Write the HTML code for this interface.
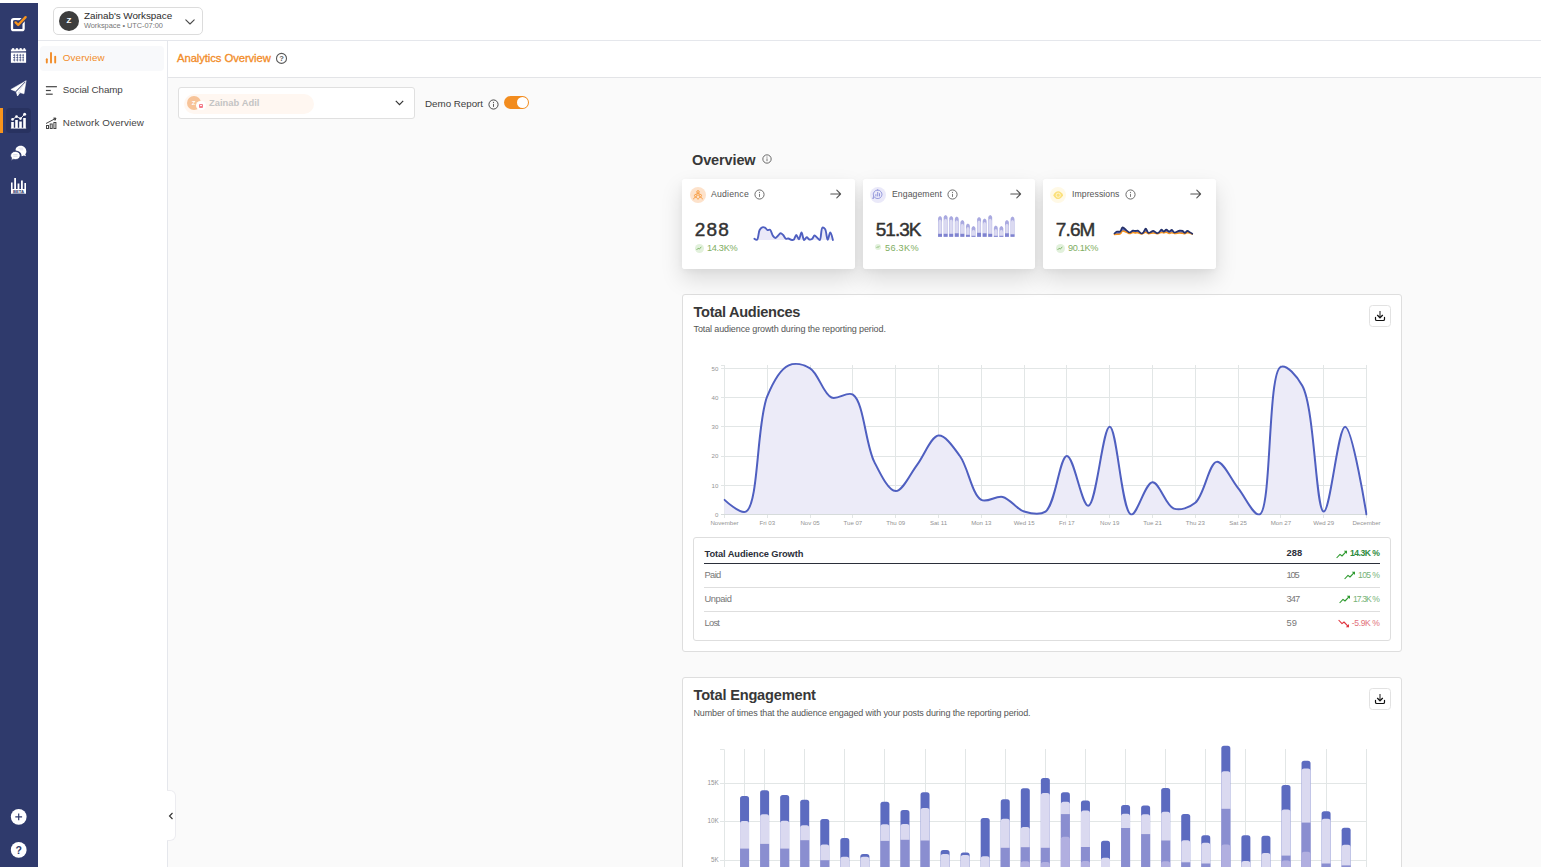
<!DOCTYPE html>
<html lang="en">
<head>
<meta charset="utf-8">
<title>Analytics Overview</title>
<style>
*{box-sizing:border-box;margin:0;padding:0}
html,body{width:1541px;height:867px;overflow:hidden;background:#fafafa;font-family:"Liberation Sans",sans-serif;color:#333}
.abs{position:absolute}
#rail{left:0;top:3px;width:38px;height:864px;background:#2f3a6c}
#topbar{left:38px;top:0;width:1503px;height:41px;background:#fff;border-bottom:1px solid #e5e7ec}
#topwhite{left:0;top:0;width:38px;height:3px;background:#fff}
#sidenav{left:38px;top:41px;width:130px;height:826px;background:#fff;border-right:1px solid #e5e7ec}
#header{left:168px;top:41px;width:1373px;height:37px;background:#fff;border-bottom:1px solid #e3e4e7}
#ws{left:53px;top:7px;width:150px;height:28px;border:1px solid #dcdcdc;border-radius:5px;background:#fff}
#ws .av{left:5px;top:3px;width:20px;height:20px;border-radius:50%;background:#3d3d3d;color:#fff;font-size:8px;font-weight:bold;text-align:center;line-height:20px}
#ws .t1{left:30px;top:1.6px;font-size:9.9px;line-height:12px;color:#2b2b2b;white-space:nowrap;letter-spacing:-0.05px}
#ws .t2{left:30px;top:13px;font-size:7.4px;line-height:10px;color:#777;white-space:nowrap;letter-spacing:-0.04px}
.nav{left:2.3px;width:123.6px;height:25px;border-radius:4px;font-size:9.8px;line-height:25px;color:#444;white-space:nowrap}
.nav span{position:absolute;left:22.5px;top:-0.6px}
.nav svg{position:absolute;left:4.7px;top:5px}
.nav.on{background:#f8f9fb;color:#f28c28}
#title{left:9px;top:10px;font-size:11.3px;line-height:14px;color:#f28c28;white-space:nowrap;letter-spacing:-0.09px;-webkit-text-stroke:0.3px #f28c28}
</style>
</head>
<body>
<div id="topwhite" class="abs"></div>
<div id="rail" class="abs">
<!-- compose -->
<svg class="abs" style="left:10px;top:12px" width="18" height="17" viewBox="0 0 18 17"><rect x="2" y="4.2" width="11.6" height="11" rx="1.8" fill="none" stroke="#fff" stroke-width="2.3"/><path d="M5.6 7.4 L8.2 10 L15.6 2.2" fill="none" stroke="#2f3a6c" stroke-width="4.6" stroke-linecap="round" stroke-linejoin="round"/><path d="M5.6 7.4 L8.2 10 L15.6 2.2" fill="none" stroke="#f7941d" stroke-width="2.4" stroke-linecap="round" stroke-linejoin="round"/></svg>
<!-- calendar -->
<svg class="abs" style="left:10px;top:44px" width="17" height="17" viewBox="0 0 17 17"><path d="M0.900 4.400V2.400H1.900V1.600Q3.100 0.300 4.300 1.600V2.400H5.700V1.600Q6.900 0.300 8.100 1.600V2.400H9.500V1.600Q10.700 0.300 11.900 1.600V2.400H13.300V1.600Q14.500 0.300 15.200 1.600V2.400H16.100V4.250Z" fill="#fff"/><rect x="0.900" y="5.500" width="15.200" height="10.300" fill="#fff"/><g stroke="#3a4678" stroke-width="0.750" fill="none"><path d="M3 8.200H14M3 10.600H14M3 13H14" stroke-dasharray="2.200 0.900"/><path d="M4.600 6.900V14.400M7.500 6.900V14.400M10.400 6.900V14.400M13.200 6.900V14.400" stroke-width="0.600"/></g></svg>
<!-- plane -->
<svg class="abs" style="left:10px;top:77px" width="18" height="17" viewBox="0 0 18 17"><g fill="#fff" stroke="#fff" stroke-width="0.500" stroke-linejoin="round"><path d="M16.100 0.800L0.900 9.400L5.500 11.300Z"/><path d="M16.100 0.800L8.600 12.300L14 13.800Z"/><path d="M14.300 3L6.200 11.900L7.500 15.900L8.300 12.600Z"/><path d="M7.700 15.700L9.700 13L8.500 12.700Z"/></g><path d="M15.200 1.900L5.900 11.700" stroke="#303b6c" stroke-width="0.700" fill="none"/></svg>
<!-- analytics active -->
<div class="abs" style="left:0;top:105px;width:3px;height:25px;background:#f7941d"></div>
<div class="abs" style="left:6px;top:105px;width:25px;height:25px;background:#283260;border-radius:4px"></div>
<svg class="abs" style="left:10px;top:109px" width="17" height="17" viewBox="0 0 17 17"><g fill="#fff"><rect x="1.2" y="10" width="2.6" height="6"/><rect x="5.2" y="8" width="2.6" height="8"/><rect x="9.2" y="9.5" width="2.6" height="6.5"/><rect x="13.2" y="6" width="2.6" height="10"/><circle cx="2.5" cy="7.4" r="1.3"/><circle cx="6.5" cy="4.6" r="1.3"/><circle cx="10.5" cy="6.6" r="1.3"/><circle cx="14.6" cy="2.2" r="1.5"/></g><path d="M2.5 7.4 L6.5 4.6 L10.5 6.6 L14.6 2.2" fill="none" stroke="#fff" stroke-width="0.9"/><path d="M0.8 16.2H16.2" stroke="#fff" stroke-width="0.8"/></svg>
<!-- chat -->
<svg class="abs" style="left:10px;top:142px" width="17" height="17" viewBox="0 0 17 17"><path d="M10.8 0.8c-3 0-5.2 1.8-5.2 4 0 .3 0 .5.1.8 3.2.2 5.8 2.300 5.800 5 0 .2 0 .4-.1.600.9-.1 1.700-.4 2.400-.8l2.200.9-.7-2c.7-.8 1.100-1.700 1.100-2.700 0-3.200-2.500-5.800-5.600-5.800z" fill="#fff"/><path d="M5.400 6.400c-2.700 0-4.800 1.800-4.800 4.100 0 1 .4 1.900 1.100 2.600l-.6 2.300 2.400-1.100c.6.200 1.200.3 1.900.3 2.700 0 4.800-1.800 4.800-4.100s-2.100-4.100-4.800-4.100z" fill="#fff" stroke="#2f3a6c" stroke-width="0.7"/><path d="M3.200 9.600H7.600M3.200 11.200H7.600" stroke="#c9cde0" stroke-width="0.7"/><path d="M8.600 3.200H13.200M9.800 4.800H13.200" stroke="#c9cde0" stroke-width="0.6"/></svg>
<!-- beta bars -->
<svg class="abs" style="left:10px;top:174px" width="17" height="17" viewBox="0 0 17 17"><g fill="#fff"><rect x="1" y="5.500" width="1.600" height="11"/><rect x="4.200" y="1" width="1.800" height="11.500"/><rect x="7.600" y="6.500" width="1.800" height="6"/><rect x="11" y="3.500" width="1.800" height="9"/><rect x="14.400" y="6" width="1.600" height="10.500"/><rect x="1" y="12" width="15" height="4.500"/></g><text x="8.500" y="15.800" font-size="4.200" font-weight="bold" text-anchor="middle" fill="#2f3a6c" font-family="Liberation Sans, sans-serif">BETA</text></svg>
<!-- plus -->
<svg class="abs" style="left:10px;top:805px" width="17" height="17" viewBox="0 0 17 17"><circle cx="8.700" cy="8.800" r="7.900" fill="#fff"/><path d="M8.700 5.400V12.200M5.300 8.800H12.100" stroke="#2f3a6c" stroke-width="1.200"/></svg>
<!-- help -->
<svg class="abs" style="left:10px;top:838px" width="17" height="17" viewBox="0 0 17 17"><circle cx="8.700" cy="8.900" r="7.900" fill="#fff"/><text x="8.700" y="12.600" font-size="10.500" font-weight="bold" text-anchor="middle" fill="#2f3a6c" font-family="Liberation Sans, sans-serif">?</text></svg>

</div>
<div id="topbar" class="abs"></div>
<div id="ws" class="abs">
  <div class="av abs">Z</div>
  <div class="t1 abs">Zainab's Workspace</div>
  <div class="t2 abs">Workspace • UTC-07:00</div>
  <svg class="abs" style="left:131.3px;top:11.3px" width="10" height="6" viewBox="0 0 10 6"><path d="M0.8 0.8 L5 5 L9.2 0.8" fill="none" stroke="#4a4a4a" stroke-width="1.1" stroke-linecap="round" stroke-linejoin="round"/></svg>
</div>
<div id="sidenav" class="abs">
  <div class="nav on abs" style="top:5px">
    <svg width="12" height="14" viewBox="0 0 12 14"><g stroke="#f28c28" stroke-width="1.9" stroke-linecap="round"><path d="M1.8 11.6V8.3"/><path d="M6 11.6V2"/><path d="M10.2 11.6V5.7"/></g></svg>
    <span style="letter-spacing:0.137px">Overview</span></div>
  <div class="nav abs" style="top:37px">
    <svg width="12" height="14" viewBox="0 0 12 14"><g stroke="#444" stroke-width="1.2"><path d="M0.9 3.7H11.9"/><path d="M0.9 7.5H5.8"/><path d="M0.9 11.2H7.7"/></g></svg>
    <span style="letter-spacing:-0.092px">Social Champ</span></div>
  <div class="nav abs" style="top:70px">
    <svg width="12" height="14" viewBox="0 0 12 14"><g fill="none" stroke="#444" stroke-width="1"><rect x="1.5" y="9.5" width="2" height="3"/><rect x="5.2" y="8" width="2" height="4.5"/><rect x="8.9" y="6.5" width="2" height="6"/><path d="M1 7.5 L10.5 2.5"/><path d="M8.5 2 L11 2.2 L10 4.5" fill="#444"/></g></svg>
    <span style="letter-spacing:0.100px">Network Overview</span></div>
</div>
<div id="header" class="abs">
  <div id="title" class="abs">Analytics Overview</div>
  <svg class="abs" style="left:107px;top:11px" width="13" height="13" viewBox="0 0 13 13"><circle cx="6.5" cy="6.4" r="5" fill="none" stroke="#595959" stroke-width="1.1"/><text x="6.5" y="9.2" font-size="7.6" font-weight="bold" text-anchor="middle" fill="#5e5e5e" font-family="Liberation Sans, sans-serif">?</text></svg>
</div>
<div class="abs" style="left:167px;top:790px;width:9px;height:51px;background:#fff;border-radius:0 6px 6px 0;border:1px solid #ececf0;border-left:none"></div>
<svg class="abs" style="left:168px;top:811.7px" width="6" height="8" viewBox="0 0 6 8"><path d="M4.5 1 L1.5 4 L4.5 7" fill="none" stroke="#333" stroke-width="1.15"/></svg>
<div class="abs" style="left:682px;top:294px;width:720px;height:358px;background:#fff;border:1px solid #dedede;border-radius:3px"></div>
<div class="abs" style="left:693.500px;top:303px;font-size:14.600px;line-height:18px;font-weight:bold;color:#383838;white-space:nowrap;letter-spacing:-0.296px">Total Audiences</div>
<div class="abs" style="left:693.500px;top:323px;font-size:9px;line-height:12px;color:#555;white-space:nowrap;letter-spacing:-0.117px">Total audience growth during the reporting period.</div>
<div class="abs" style="left:1369px;top:305px;width:22px;height:22px;border:1px solid #e2e2e2;border-radius:3.500px;background:#fff"></div><svg class="abs" style="left:1374px;top:310px" width="12" height="12" viewBox="0 0 12 12"><path d="M6 1V7" fill="none" stroke="#666" stroke-width="1.500"/><path d="M3.200 5L6 7.700L8.800 5" fill="none" stroke="#111" stroke-width="1.300" stroke-linejoin="round"/><path d="M1.500 7.300V9.200Q1.500 10.500 2.800 10.500H9.200Q10.500 10.500 10.500 9.200V7.300" fill="none" stroke="#111" stroke-width="1.200" stroke-linecap="round"/></svg>
<svg class="abs" style="left:0;top:0" width="1541" height="867" viewBox="0 0 1541 867" font-family="Liberation Sans, sans-serif">
<clipPath id="c1"><rect x="723.5" y="355" width="644.0" height="160.4"/></clipPath>
<g stroke="#e2e6e6" stroke-width="1" fill="none">
<path d="M721.0 365.5H724.5"/>
<path d="M724.5 365.0V518.0"/>
<path d="M767.5 365.0V518.0"/>
<path d="M810.5 365.0V518.0"/>
<path d="M852.5 365.0V518.0"/>
<path d="M895.5 365.0V518.0"/>
<path d="M938.5 365.0V518.0"/>
<path d="M981.5 365.0V518.0"/>
<path d="M1024.5 365.0V518.0"/>
<path d="M1066.5 365.0V518.0"/>
<path d="M1109.5 365.0V518.0"/>
<path d="M1152.5 365.0V518.0"/>
<path d="M1195.5 365.0V518.0"/>
<path d="M1238.5 365.0V518.0"/>
<path d="M1280.5 365.0V518.0"/>
<path d="M1323.5 365.0V518.0"/>
<path d="M1366.5 365.0V518.0"/>
<path d="M721.0 514.5H1367.0"/>
<path d="M721.0 485.5H1367.0"/>
<path d="M721.0 456.5H1367.0"/>
<path d="M721.0 426.5H1367.0"/>
<path d="M721.0 397.5H1367.0"/>
<path d="M721.0 368.5H1367.0"/>
</g>
<g clip-path="url(#c1)"><path d="M724.50 499.88C724.50 499.88 739.98 514.39 745.90 511.58C758.89 505.40 756.65 421.56 767.30 396.08C773.31 381.70 780.28 369.07 788.70 365.38C795.09 362.57 803.68 364.47 810.10 368.30C818.42 373.26 823.18 394.01 831.50 397.54C837.92 400.27 846.90 390.83 852.90 394.62C863.74 401.47 865.52 444.59 874.30 461.87C880.59 474.25 888.44 490.92 895.70 491.11C902.72 491.29 910.08 473.89 917.10 464.79C924.36 455.39 930.97 436.22 938.50 435.55C945.31 434.95 953.46 447.20 959.90 456.02C968.17 467.35 972.01 494.92 981.30 499.88C987.48 503.18 995.86 495.34 1002.70 496.96C1010.19 498.72 1016.59 509.26 1024.10 511.58C1030.92 513.68 1039.44 515.74 1045.50 511.58C1055.61 504.63 1059.59 456.16 1066.90 456.02C1073.87 455.88 1081.76 506.19 1088.30 505.73C1096.34 505.16 1102.73 426.69 1109.70 426.78C1117.02 426.87 1121.69 512.85 1131.10 514.50C1137.26 515.58 1145.12 482.69 1152.50 482.34C1159.42 482.00 1165.83 506.06 1173.90 508.65C1180.42 510.75 1189.06 507.83 1195.30 502.80C1204.30 495.56 1208.93 462.65 1216.70 461.87C1223.36 461.20 1230.97 479.41 1238.10 488.18C1245.23 496.96 1253.57 516.14 1259.50 514.50C1271.93 511.07 1267.40 371.77 1280.90 366.84C1286.81 364.68 1296.37 375.16 1302.30 385.84C1314.81 408.39 1315.76 511.26 1323.70 511.58C1330.28 511.83 1338.02 426.75 1345.10 426.78C1352.29 426.81 1366.50 514.50 1366.50 514.50L1366.50 514.50L724.50 514.50Z" fill="#ecebf8"/></g>
<path d="M721.0 514.5H1367.0" stroke="#d6dbdb" stroke-width="1" fill="none"/>
<g font-size="6.100" fill="#939393">
<text x="718.3" y="516.7" text-anchor="end">0</text>
<text x="718.3" y="487.5" text-anchor="end">10</text>
<text x="718.3" y="458.2" text-anchor="end">20</text>
<text x="718.3" y="429.0" text-anchor="end">30</text>
<text x="718.3" y="399.7" text-anchor="end">40</text>
<text x="718.3" y="370.5" text-anchor="end">50</text>
<text x="724.5" y="525.3" text-anchor="middle">November</text>
<text x="767.3" y="525.3" text-anchor="middle">Fri 03</text>
<text x="810.1" y="525.3" text-anchor="middle">Nov 05</text>
<text x="852.9" y="525.3" text-anchor="middle">Tue 07</text>
<text x="895.7" y="525.3" text-anchor="middle">Thu 09</text>
<text x="938.5" y="525.3" text-anchor="middle">Sat 11</text>
<text x="981.3" y="525.3" text-anchor="middle">Mon 13</text>
<text x="1024.1" y="525.3" text-anchor="middle">Wed 15</text>
<text x="1066.9" y="525.3" text-anchor="middle">Fri 17</text>
<text x="1109.7" y="525.3" text-anchor="middle">Nov 19</text>
<text x="1152.5" y="525.3" text-anchor="middle">Tue 21</text>
<text x="1195.3" y="525.3" text-anchor="middle">Thu 23</text>
<text x="1238.1" y="525.3" text-anchor="middle">Sat 25</text>
<text x="1280.9" y="525.3" text-anchor="middle">Mon 27</text>
<text x="1323.7" y="525.3" text-anchor="middle">Wed 29</text>
<text x="1366.5" y="525.3" text-anchor="middle">December</text>
</g>
<g clip-path="url(#c1)"><path d="M724.50 499.88C724.50 499.88 739.98 514.39 745.90 511.58C758.89 505.40 756.65 421.56 767.30 396.08C773.31 381.70 780.28 369.07 788.70 365.38C795.09 362.57 803.68 364.47 810.10 368.30C818.42 373.26 823.18 394.01 831.50 397.54C837.92 400.27 846.90 390.83 852.90 394.62C863.74 401.47 865.52 444.59 874.30 461.87C880.59 474.25 888.44 490.92 895.70 491.11C902.72 491.29 910.08 473.89 917.10 464.79C924.36 455.39 930.97 436.22 938.50 435.55C945.31 434.95 953.46 447.20 959.90 456.02C968.17 467.35 972.01 494.92 981.30 499.88C987.48 503.18 995.86 495.34 1002.70 496.96C1010.19 498.72 1016.59 509.26 1024.10 511.58C1030.92 513.68 1039.44 515.74 1045.50 511.58C1055.61 504.63 1059.59 456.16 1066.90 456.02C1073.87 455.88 1081.76 506.19 1088.30 505.73C1096.34 505.16 1102.73 426.69 1109.70 426.78C1117.02 426.87 1121.69 512.85 1131.10 514.50C1137.26 515.58 1145.12 482.69 1152.50 482.34C1159.42 482.00 1165.83 506.06 1173.90 508.65C1180.42 510.75 1189.06 507.83 1195.30 502.80C1204.30 495.56 1208.93 462.65 1216.70 461.87C1223.36 461.20 1230.97 479.41 1238.10 488.18C1245.23 496.96 1253.57 516.14 1259.50 514.50C1271.93 511.07 1267.40 371.77 1280.90 366.84C1286.81 364.68 1296.37 375.16 1302.30 385.84C1314.81 408.39 1315.76 511.26 1323.70 511.58C1330.28 511.83 1338.02 426.75 1345.10 426.78C1352.29 426.81 1366.50 514.50 1366.50 514.50" fill="none" stroke="#4f5fc0" stroke-width="2" stroke-linecap="round"/></g>
</svg>
<div class="abs" style="left:693px;top:537px;width:698px;height:104px;background:#fff;border:1px solid #dedede;border-radius:3px"></div>
<div class="abs" style="left:704px;top:563px;width:676px;height:1.200px;background:#2b2f3a"></div>
<div class="abs" style="left:704px;top:587px;width:676px;height:1px;background:#dedede"></div>
<div class="abs" style="left:704px;top:611px;width:676px;height:1px;background:#dedede"></div>
<div class="abs" style="left:704.500px;top:548.2px;font-size:9.300px;line-height:12px;font-weight:bold;color:#2b2f3a;white-space:nowrap;letter-spacing:-0.093px">Total Audience Growth</div>
<div class="abs" style="left:1286.500px;top:547.0px;font-size:9.300px;line-height:12px;font-weight:bold;color:#2b2f3a;white-space:nowrap;letter-spacing:0.091px">288</div>
<div class="abs" style="left:1350px;top:547.0px;font-size:8.600px;line-height:12px;font-weight:bold;color:#2e8b3e;white-space:nowrap;letter-spacing:-0.498px">14.3K %</div>
<svg class="abs" style="left:1336px;top:550px" width="12" height="9" viewBox="0 0 12 9"><path d="M0.600 8 L4 4.300 L6 6 L10.600 1.200" fill="none" stroke="#2e9a2e" stroke-width="1.100" stroke-linejoin="round"/><path d="M7.800 0.800H11V4Z" fill="#2e9a2e"/></svg>
<div class="abs" style="left:704.500px;top:568.7px;font-size:9.300px;line-height:12px;color:#777;white-space:nowrap;letter-spacing:-0.605px">Paid</div>
<div class="abs" style="left:1286.500px;top:568.7px;font-size:9.300px;line-height:12px;color:#777;white-space:nowrap;letter-spacing:-1.159px">105</div>
<div class="abs" style="left:1358px;top:568.7px;font-size:8.600px;line-height:12px;color:#78b378;white-space:nowrap;letter-spacing:-0.596px">105 %</div>
<svg class="abs" style="left:1344px;top:571.2px" width="12" height="9" viewBox="0 0 12 9"><path d="M0.600 8 L4 4.300 L6 6 L10.600 1.200" fill="none" stroke="#2e9a2e" stroke-width="1.100" stroke-linejoin="round"/><path d="M7.800 0.800H11V4Z" fill="#2e9a2e"/></svg>
<div class="abs" style="left:704.500px;top:592.7px;font-size:9.300px;line-height:12px;color:#777;white-space:nowrap;letter-spacing:-0.414px">Unpaid</div>
<div class="abs" style="left:1286.500px;top:592.7px;font-size:9.300px;line-height:12px;color:#777;white-space:nowrap;letter-spacing:-0.859px">347</div>
<div class="abs" style="left:1353px;top:592.7px;font-size:8.600px;line-height:12px;color:#78b378;white-space:nowrap;letter-spacing:-0.918px">17.3K %</div>
<svg class="abs" style="left:1339px;top:595.2px" width="12" height="9" viewBox="0 0 12 9"><path d="M0.600 8 L4 4.300 L6 6 L10.600 1.200" fill="none" stroke="#2e9a2e" stroke-width="1.100" stroke-linejoin="round"/><path d="M7.800 0.800H11V4Z" fill="#2e9a2e"/></svg>
<div class="abs" style="left:704.500px;top:616.5px;font-size:9.300px;line-height:12px;color:#777;white-space:nowrap;letter-spacing:-0.726px">Lost</div>
<div class="abs" style="left:1286.500px;top:616.5px;font-size:9.300px;line-height:12px;color:#777;white-space:nowrap;letter-spacing:-0.045px">59</div>
<div class="abs" style="left:1351.8px;top:616.5px;font-size:8.600px;line-height:12px;color:#e2727c;white-space:nowrap;letter-spacing:-0.399px">-5.9K %</div>
<svg class="abs" style="left:1338px;top:619px" width="12" height="9" viewBox="0 0 12 9"><path d="M0.600 1 L4 4.700 L6 3 L10.600 7.800" fill="none" stroke="#e0323c" stroke-width="1.100" stroke-linejoin="round"/><path d="M7.800 8.200H11V5Z" fill="#e0323c"/></svg>
<div class="abs" style="left:682px;top:677px;width:720px;height:400px;background:#fff;border:1px solid #dedede;border-radius:3px"></div>
<div class="abs" style="left:693.500px;top:686px;font-size:14.600px;line-height:18px;font-weight:bold;color:#383838;white-space:nowrap;letter-spacing:-0.197px">Total Engagement</div>
<div class="abs" style="left:693.500px;top:707px;font-size:9px;line-height:12px;color:#555;white-space:nowrap;letter-spacing:-0.131px">Number of times that the audience engaged with your posts during the reporting period.</div>
<div class="abs" style="left:1369px;top:688px;width:22px;height:22px;border:1px solid #e2e2e2;border-radius:3.500px;background:#fff"></div><svg class="abs" style="left:1374px;top:693px" width="12" height="12" viewBox="0 0 12 12"><path d="M6 1V7" fill="none" stroke="#666" stroke-width="1.500"/><path d="M3.200 5L6 7.700L8.800 5" fill="none" stroke="#111" stroke-width="1.300" stroke-linejoin="round"/><path d="M1.500 7.300V9.200Q1.500 10.500 2.800 10.500H9.200Q10.500 10.500 10.500 9.200V7.300" fill="none" stroke="#111" stroke-width="1.200" stroke-linecap="round"/></svg>
<svg class="abs" style="left:0;top:0" width="1541" height="867" viewBox="0 0 1541 867" font-family="Liberation Sans, sans-serif">
<g stroke="#e2e6e6" stroke-width="1" fill="none">
<path d="M720.0 749.500H724.5V870"/>
<path d="M744.5 749V870"/>
<path d="M764.5 749V870"/>
<path d="M804.5 749V870"/>
<path d="M844.5 749V870"/>
<path d="M884.5 749V870"/>
<path d="M925.5 749V870"/>
<path d="M965.5 749V870"/>
<path d="M1005.5 749V870"/>
<path d="M1045.5 749V870"/>
<path d="M1085.5 749V870"/>
<path d="M1125.5 749V870"/>
<path d="M1165.5 749V870"/>
<path d="M1205.5 749V870"/>
<path d="M1245.5 749V870"/>
<path d="M1285.5 749V870"/>
<path d="M1326.5 749V870"/>
<path d="M1366.5 749V870"/>
<path d="M720.0 783.5H1367"/>
<path d="M720.0 821.5H1367"/>
<path d="M720.0 860.5H1367"/>
</g>
<g font-size="6.300" fill="#939393" text-anchor="end">
<text x="718.600" y="784.9">15K</text>
<text x="718.600" y="822.9">10K</text>
<text x="718.600" y="861.8">5K</text>
</g>
<path d="M740.05 870.00V798.70Q740.05 796.10 742.65 796.10H746.45Q749.05 796.10 749.05 798.70V870.00Z" fill="#5c6bc0"/>
<path d="M740.05 870.00V823.60Q740.05 821.00 742.65 821.00H746.45Q749.05 821.00 749.05 823.60V870.00Z" fill="#dad9f0"/>
<rect x="740.05" y="848.60" width="9.00" height="21.40" fill="#8a8ed0"/>
<path d="M760.11 870.00V792.80Q760.11 790.20 762.71 790.20H766.51Q769.11 790.20 769.11 792.80V870.00Z" fill="#5c6bc0"/>
<path d="M760.11 870.00V816.80Q760.11 814.20 762.71 814.20H766.51Q769.11 814.20 769.11 816.80V870.00Z" fill="#dad9f0"/>
<rect x="760.11" y="843.90" width="9.00" height="26.10" fill="#8a8ed0"/>
<path d="M780.16 870.00V797.60Q780.16 795.00 782.76 795.00H786.56Q789.16 795.00 789.16 797.60V870.00Z" fill="#5c6bc0"/>
<path d="M780.16 870.00V823.30Q780.16 820.70 782.76 820.70H786.56Q789.16 820.70 789.16 823.30V870.00Z" fill="#dad9f0"/>
<rect x="780.16" y="848.60" width="9.00" height="21.40" fill="#8a8ed0"/>
<path d="M800.21 870.00V802.30Q800.21 799.70 802.81 799.70H806.61Q809.21 799.70 809.21 802.30V870.00Z" fill="#5c6bc0"/>
<path d="M800.21 870.00V827.80Q800.21 825.20 802.81 825.20H806.61Q809.21 825.20 809.21 827.80V870.00Z" fill="#dad9f0"/>
<rect x="800.21" y="840.20" width="9.00" height="29.80" fill="#8a8ed0"/>
<path d="M820.26 870.00V821.70Q820.26 819.10 822.87 819.10H826.66Q829.26 819.10 829.26 821.70V870.00Z" fill="#5c6bc0"/>
<path d="M820.26 870.00V847.10Q820.26 844.50 822.87 844.50H826.66Q829.26 844.50 829.26 847.10V870.00Z" fill="#dad9f0"/>
<rect x="820.26" y="860.20" width="9.00" height="9.80" fill="#8a8ed0"/>
<path d="M840.32 870.00V840.70Q840.32 838.10 842.92 838.10H846.72Q849.32 838.10 849.32 840.70V870.00Z" fill="#5c6bc0"/>
<path d="M840.32 870.00V859.40Q840.32 856.80 842.92 856.80H846.72Q849.32 856.80 849.32 859.40V870.00Z" fill="#dad9f0"/>
<path d="M860.37 870.00V856.50Q860.37 853.90 862.97 853.90H866.77Q869.37 853.90 869.37 856.50V870.00Z" fill="#5c6bc0"/>
<path d="M860.37 870.00V859.40Q860.37 856.80 862.97 856.80H866.77Q869.37 856.80 869.37 859.40V870.00Z" fill="#dad9f0"/>
<path d="M880.42 870.00V804.40Q880.42 801.80 883.02 801.80H886.82Q889.42 801.80 889.42 804.40V870.00Z" fill="#5c6bc0"/>
<path d="M880.42 870.00V826.90Q880.42 824.30 883.02 824.30H886.82Q889.42 824.30 889.42 826.90V870.00Z" fill="#dad9f0"/>
<rect x="880.42" y="840.90" width="9.00" height="29.10" fill="#8a8ed0"/>
<path d="M900.48 870.00V812.70Q900.48 810.10 903.08 810.10H906.88Q909.48 810.10 909.48 812.70V870.00Z" fill="#5c6bc0"/>
<path d="M900.48 870.00V826.70Q900.48 824.10 903.08 824.10H906.88Q909.48 824.10 909.48 826.70V870.00Z" fill="#dad9f0"/>
<rect x="900.48" y="839.80" width="9.00" height="30.20" fill="#8a8ed0"/>
<path d="M920.53 870.00V794.80Q920.53 792.20 923.13 792.20H926.93Q929.53 792.20 929.53 794.80V870.00Z" fill="#5c6bc0"/>
<path d="M920.53 870.00V810.50Q920.53 807.90 923.13 807.90H926.93Q929.53 807.90 929.53 810.50V870.00Z" fill="#dad9f0"/>
<rect x="920.53" y="840.50" width="9.00" height="29.50" fill="#8a8ed0"/>
<path d="M940.58 870.00V852.70Q940.58 850.10 943.18 850.10H946.98Q949.58 850.10 949.58 852.70V870.00Z" fill="#5c6bc0"/>
<path d="M940.58 870.00V856.50Q940.58 853.90 943.18 853.90H946.98Q949.58 853.90 949.58 856.50V870.00Z" fill="#dad9f0"/>
<path d="M960.64 870.00V855.10Q960.64 852.50 963.24 852.50H967.04Q969.64 852.50 969.64 855.10V870.00Z" fill="#5c6bc0"/>
<path d="M960.64 870.00V857.60Q960.64 855.00 963.24 855.00H967.04Q969.64 855.00 969.64 857.60V870.00Z" fill="#dad9f0"/>
<path d="M980.69 870.00V820.50Q980.69 817.90 983.29 817.90H987.09Q989.69 817.90 989.69 820.50V870.00Z" fill="#5c6bc0"/>
<path d="M980.69 870.00V858.80Q980.69 856.20 983.29 856.20H987.09Q989.69 856.20 989.69 858.80V870.00Z" fill="#dad9f0"/>
<path d="M1000.74 870.00V801.90Q1000.74 799.30 1003.34 799.30H1007.14Q1009.74 799.30 1009.74 801.90V870.00Z" fill="#5c6bc0"/>
<path d="M1000.74 870.00V821.40Q1000.74 818.80 1003.34 818.80H1007.14Q1009.74 818.80 1009.74 821.40V870.00Z" fill="#dad9f0"/>
<rect x="1000.74" y="847.80" width="9.00" height="22.20" fill="#8a8ed0"/>
<path d="M1020.80 870.00V790.90Q1020.80 788.30 1023.40 788.30H1027.20Q1029.80 788.30 1029.80 790.90V870.00Z" fill="#5c6bc0"/>
<path d="M1020.80 870.00V829.50Q1020.80 826.90 1023.40 826.90H1027.20Q1029.80 826.90 1029.80 829.50V870.00Z" fill="#dad9f0"/>
<rect x="1020.80" y="847.20" width="9.00" height="22.80" fill="#8a8ed0"/>
<path d="M1020.80 870.00V863.80Q1020.80 861.20 1023.40 861.20H1027.20Q1029.80 861.20 1029.80 863.80V870.00Z" fill="#b1afe0"/>
<path d="M1040.85 870.00V780.50Q1040.85 777.90 1043.45 777.90H1047.25Q1049.85 777.90 1049.85 780.50V870.00Z" fill="#5c6bc0"/>
<path d="M1040.85 870.00V795.70Q1040.85 793.10 1043.45 793.10H1047.25Q1049.85 793.10 1049.85 795.70V870.00Z" fill="#dad9f0"/>
<rect x="1040.85" y="847.80" width="9.00" height="22.20" fill="#8a8ed0"/>
<path d="M1040.85 870.00V864.60Q1040.85 862.00 1043.45 862.00H1047.25Q1049.85 862.00 1049.85 864.60V870.00Z" fill="#b1afe0"/>
<path d="M1060.90 870.00V794.90Q1060.90 792.30 1063.50 792.30H1067.30Q1069.90 792.30 1069.90 794.90V870.00Z" fill="#5c6bc0"/>
<path d="M1060.90 870.00V804.30Q1060.90 801.70 1063.50 801.70H1067.30Q1069.90 801.70 1069.90 804.30V870.00Z" fill="#dad9f0"/>
<rect x="1060.90" y="814.10" width="9.00" height="55.90" fill="#8a8ed0"/>
<path d="M1060.90 870.00V839.30Q1060.90 836.70 1063.50 836.70H1067.30Q1069.90 836.70 1069.90 839.30V870.00Z" fill="#b1afe0"/>
<path d="M1080.95 870.00V803.00Q1080.95 800.40 1083.55 800.40H1087.35Q1089.95 800.40 1089.95 803.00V870.00Z" fill="#5c6bc0"/>
<path d="M1080.95 870.00V813.20Q1080.95 810.60 1083.55 810.60H1087.35Q1089.95 810.60 1089.95 813.20V870.00Z" fill="#dad9f0"/>
<rect x="1080.95" y="847.00" width="9.00" height="23.00" fill="#8a8ed0"/>
<path d="M1080.95 870.00V863.50Q1080.95 860.90 1083.55 860.90H1087.35Q1089.95 860.90 1089.95 863.50V870.00Z" fill="#b1afe0"/>
<path d="M1101.01 870.00V843.40Q1101.01 840.80 1103.61 840.80H1107.41Q1110.01 840.80 1110.01 843.40V870.00Z" fill="#5c6bc0"/>
<path d="M1101.01 870.00V860.40Q1101.01 857.80 1103.61 857.80H1107.41Q1110.01 857.80 1110.01 860.40V870.00Z" fill="#dad9f0"/>
<path d="M1121.06 870.00V807.60Q1121.06 805.00 1123.66 805.00H1127.46Q1130.06 805.00 1130.06 807.60V870.00Z" fill="#5c6bc0"/>
<path d="M1121.06 870.00V816.30Q1121.06 813.70 1123.66 813.70H1127.46Q1130.06 813.70 1130.06 816.30V870.00Z" fill="#dad9f0"/>
<rect x="1121.06" y="828.00" width="9.00" height="42.00" fill="#8a8ed0"/>
<path d="M1141.11 870.00V808.00Q1141.11 805.40 1143.71 805.40H1147.51Q1150.11 805.40 1150.11 808.00V870.00Z" fill="#5c6bc0"/>
<path d="M1141.11 870.00V816.80Q1141.11 814.20 1143.71 814.20H1147.51Q1150.11 814.20 1150.11 816.80V870.00Z" fill="#dad9f0"/>
<rect x="1141.11" y="834.10" width="9.00" height="35.90" fill="#8a8ed0"/>
<path d="M1161.17 870.00V790.60Q1161.17 788.00 1163.77 788.00H1167.57Q1170.17 788.00 1170.17 790.60V870.00Z" fill="#5c6bc0"/>
<path d="M1161.17 870.00V814.40Q1161.17 811.80 1163.77 811.80H1167.57Q1170.17 811.80 1170.17 814.40V870.00Z" fill="#dad9f0"/>
<rect x="1161.17" y="840.50" width="9.00" height="29.50" fill="#8a8ed0"/>
<path d="M1161.17 870.00V863.80Q1161.17 861.20 1163.77 861.20H1167.57Q1170.17 861.20 1170.17 863.80V870.00Z" fill="#b1afe0"/>
<path d="M1181.22 870.00V816.60Q1181.22 814.00 1183.82 814.00H1187.62Q1190.22 814.00 1190.22 816.60V870.00Z" fill="#5c6bc0"/>
<path d="M1181.22 870.00V842.80Q1181.22 840.20 1183.82 840.20H1187.62Q1190.22 840.20 1190.22 842.80V870.00Z" fill="#dad9f0"/>
<rect x="1181.22" y="862.30" width="9.00" height="7.70" fill="#8a8ed0"/>
<path d="M1201.27 870.00V837.90Q1201.27 835.30 1203.87 835.30H1207.67Q1210.27 835.30 1210.27 837.90V870.00Z" fill="#5c6bc0"/>
<path d="M1201.27 870.00V845.40Q1201.27 842.80 1203.87 842.80H1207.67Q1210.27 842.80 1210.27 845.40V870.00Z" fill="#dad9f0"/>
<rect x="1201.27" y="863.50" width="9.00" height="6.50" fill="#8a8ed0"/>
<path d="M1221.33 870.00V748.40Q1221.33 745.80 1223.92 745.80H1227.73Q1230.33 745.80 1230.33 748.40V870.00Z" fill="#5c6bc0"/>
<path d="M1221.33 870.00V773.90Q1221.33 771.30 1223.92 771.30H1227.73Q1230.33 771.30 1230.33 773.90V870.00Z" fill="#dad9f0"/>
<rect x="1221.33" y="808.80" width="9.00" height="61.20" fill="#8a8ed0"/>
<path d="M1221.33 870.00V847.00Q1221.33 844.40 1223.92 844.40H1227.73Q1230.33 844.40 1230.33 847.00V870.00Z" fill="#b1afe0"/>
<path d="M1241.38 870.00V837.90Q1241.38 835.30 1243.98 835.30H1247.78Q1250.38 835.30 1250.38 837.90V870.00Z" fill="#5c6bc0"/>
<path d="M1241.38 870.00V863.50Q1241.38 860.90 1243.98 860.90H1247.78Q1250.38 860.90 1250.38 863.50V870.00Z" fill="#dad9f0"/>
<path d="M1261.43 870.00V838.40Q1261.43 835.80 1264.03 835.80H1267.83Q1270.43 835.80 1270.43 838.40V870.00Z" fill="#5c6bc0"/>
<path d="M1261.43 870.00V855.50Q1261.43 852.90 1264.03 852.90H1267.83Q1270.43 852.90 1270.43 855.50V870.00Z" fill="#dad9f0"/>
<path d="M1281.48 870.00V787.50Q1281.48 784.90 1284.08 784.90H1287.88Q1290.48 784.90 1290.48 787.50V870.00Z" fill="#5c6bc0"/>
<path d="M1281.48 870.00V812.10Q1281.48 809.50 1284.08 809.50H1287.88Q1290.48 809.50 1290.48 812.10V870.00Z" fill="#dad9f0"/>
<rect x="1281.48" y="855.60" width="9.00" height="14.40" fill="#8a8ed0"/>
<path d="M1281.48 870.00V863.00Q1281.48 860.40 1284.08 860.40H1287.88Q1290.48 860.40 1290.48 863.00V870.00Z" fill="#b1afe0"/>
<path d="M1301.54 870.00V763.30Q1301.54 760.70 1304.14 760.70H1307.94Q1310.54 760.70 1310.54 763.30V870.00Z" fill="#5c6bc0"/>
<path d="M1301.54 870.00V771.10Q1301.54 768.50 1304.14 768.50H1307.94Q1310.54 768.50 1310.54 771.10V870.00Z" fill="#dad9f0"/>
<rect x="1301.54" y="822.60" width="9.00" height="47.40" fill="#8a8ed0"/>
<path d="M1301.54 870.00V854.40Q1301.54 851.80 1304.14 851.80H1307.94Q1310.54 851.80 1310.54 854.40V870.00Z" fill="#b1afe0"/>
<path d="M1321.59 870.00V813.80Q1321.59 811.20 1324.19 811.20H1327.99Q1330.59 811.20 1330.59 813.80V870.00Z" fill="#5c6bc0"/>
<path d="M1321.59 870.00V821.40Q1321.59 818.80 1324.19 818.80H1327.99Q1330.59 818.80 1330.59 821.40V870.00Z" fill="#dad9f0"/>
<rect x="1321.59" y="863.50" width="9.00" height="6.50" fill="#8a8ed0"/>
<path d="M1341.64 870.00V830.30Q1341.64 827.70 1344.24 827.70H1348.04Q1350.64 827.70 1350.64 830.30V870.00Z" fill="#5c6bc0"/>
<path d="M1341.64 870.00V847.40Q1341.64 844.80 1344.24 844.80H1348.04Q1350.64 844.80 1350.64 847.40V870.00Z" fill="#dad9f0"/>
<rect x="1341.64" y="865.40" width="9.00" height="4.60" fill="#8a8ed0"/>
</svg>
<div class="abs" style="left:178px;top:87px;width:237px;height:32px;background:#fff;border:1px solid #e0e0e0;border-radius:3px"></div>
<div class="abs" style="left:184px;top:94px;width:130px;height:20px;background:#fff7f1;border-radius:10px"></div>
<div class="abs" style="left:186.900px;top:96.100px;width:14px;height:14px;border-radius:50%;background:#f7c398;color:#fff;font-size:6px;font-weight:bold;line-height:14.500px;text-align:center;text-indent:-0.600px">Z</div>
<div class="abs" style="left:196.300px;top:101.100px;width:9.400px;height:9.400px;border-radius:50%;background:#fff"></div>
<div class="abs" style="left:198.800px;top:103.900px;width:4.400px;height:3.800px;border-radius:1px;background:#f47c8a"></div>
<div class="abs" style="left:200.300px;top:105.100px;width:1.400px;height:1.400px;border-radius:50%;background:#fff"></div>
<div class="abs" style="left:208.900px;top:96.200px;font-size:9.400px;line-height:13px;font-weight:bold;color:#c4c4c4;white-space:nowrap;letter-spacing:0.039px">Zainab Adil</div>
<svg class="abs" style="left:395px;top:100px" width="9" height="6" viewBox="0 0 9 6"><path d="M0.800 0.800 L4.500 4.600 L8.200 0.800" fill="none" stroke="#333" stroke-width="1.200"/></svg>
<div class="abs" style="left:425px;top:97px;font-size:9.800px;line-height:13px;color:#3d3d3d;white-space:nowrap;letter-spacing:-0.018px">Demo Report</div>
<svg class="abs" style="left:487.9px;top:99.0px" width="11" height="11" viewBox="0 0 12 12"><circle cx="6" cy="6" r="5" fill="none" stroke="#444" stroke-width="1.050"/><path d="M6 5.300V8.600" stroke="#444" stroke-width="0.950"/><circle cx="6" cy="3.600" r="0.650" fill="#444"/></svg>
<div class="abs" style="left:504px;top:96px;width:25px;height:13px;border-radius:7px;background:#f28c1e"></div>
<div class="abs" style="left:517px;top:97px;width:11px;height:11px;border-radius:50%;background:#fff"></div>
<div class="abs" style="left:692px;top:151px;font-size:14.500px;line-height:18px;font-weight:bold;color:#383838;white-space:nowrap;letter-spacing:-0.127px">Overview</div>
<svg class="abs" style="left:761.7px;top:153.9px" width="10" height="10" viewBox="0 0 12 12"><circle cx="6" cy="6" r="5" fill="none" stroke="#555" stroke-width="1.050"/><path d="M6 5.300V8.600" stroke="#555" stroke-width="0.950"/><circle cx="6" cy="3.600" r="0.650" fill="#555"/></svg>
<div class="abs" style="left:682px;top:179px;width:173px;height:90px;border-radius:3px;box-shadow:0 10px 22px rgba(0,0,0,.13),0 2px 6px rgba(0,0,0,.04)"></div>
<div class="abs" style="left:863px;top:179px;width:171.7px;height:90px;border-radius:3px;box-shadow:0 10px 22px rgba(0,0,0,.13),0 2px 6px rgba(0,0,0,.04)"></div>
<div class="abs" style="left:1043px;top:179px;width:173px;height:90px;border-radius:3px;box-shadow:0 10px 22px rgba(0,0,0,.13),0 2px 6px rgba(0,0,0,.04)"></div>
<div class="abs card" style="left:682px;top:179px;width:173px;height:90px;background:#fff;border-radius:3px"></div>
<div class="abs" style="left:690px;top:186.700px;width:16px;height:16px;border-radius:50%;background:#fde2cb"></div>
<div class="abs" style="left:711px;top:188px;font-size:8.700px;line-height:12px;color:#555;white-space:nowrap;letter-spacing:0.217px">Audience</div>
<svg class="abs" style="left:754.2px;top:189.2px" width="11" height="11" viewBox="0 0 12 12"><circle cx="6" cy="6" r="5" fill="none" stroke="#666" stroke-width="1.050"/><path d="M6 5.300V8.600" stroke="#666" stroke-width="0.950"/><circle cx="6" cy="3.600" r="0.650" fill="#666"/></svg>
<svg class="abs" style="left:829.5px;top:189.2px" width="12" height="10" viewBox="0 0 12 10"><path d="M0.800 5H10.600M6.800 1.200L10.600 5L6.800 8.800" fill="none" stroke="#555" stroke-width="1.100" stroke-linecap="round" stroke-linejoin="round"/></svg>
<div class="abs" style="left:694.8px;top:217.800px;font-size:19px;line-height:24px;color:#333;white-space:nowrap;letter-spacing:1.198px;-webkit-text-stroke:0.450px #333">288</div>
<div class="abs" style="left:694.8px;top:243.500px;width:9px;height:9px;border-radius:50%;background:#e2f1dc"></div>
<svg class="abs" style="left:696.3px;top:245.500px" width="6" height="5" viewBox="0 0 6 5"><path d="M0.500 4 L2.200 2.200 L3.300 3.100 L5.300 0.800" fill="none" stroke="#6aa84f" stroke-width="0.800"/></svg>
<div class="abs" style="left:707px;top:242px;font-size:9.200px;line-height:12px;color:#7fae62;white-space:nowrap;letter-spacing:-0.305px">14.3K%</div>
<div class="abs card" style="left:863px;top:179px;width:171.7px;height:90px;background:#fff;border-radius:3px"></div>
<div class="abs" style="left:869.9px;top:186.700px;width:16px;height:16px;border-radius:50%;background:#eae9f9"></div>
<div class="abs" style="left:892px;top:188px;font-size:8.700px;line-height:12px;color:#555;white-space:nowrap;letter-spacing:0.063px">Engagement</div>
<svg class="abs" style="left:947.2px;top:189.2px" width="11" height="11" viewBox="0 0 12 12"><circle cx="6" cy="6" r="5" fill="none" stroke="#666" stroke-width="1.050"/><path d="M6 5.300V8.600" stroke="#666" stroke-width="0.950"/><circle cx="6" cy="3.600" r="0.650" fill="#666"/></svg>
<svg class="abs" style="left:1009.5px;top:189.2px" width="12" height="10" viewBox="0 0 12 10"><path d="M0.800 5H10.600M6.800 1.200L10.600 5L6.800 8.800" fill="none" stroke="#555" stroke-width="1.100" stroke-linecap="round" stroke-linejoin="round"/></svg>
<div class="abs" style="left:875.8px;top:217.800px;font-size:19px;line-height:24px;color:#333;white-space:nowrap;letter-spacing:-1.013px;-webkit-text-stroke:0.450px #333">51.3K</div>
<div class="abs" style="left:875.3px;top:243.500px;width:6px;height:6px;border-radius:50%;background:#e2f1dc"></div>
<svg class="abs" style="left:876.3px;top:244.500px" width="4" height="4" viewBox="0 0 4 4"><path d="M0.500 3 L1.600 1.800 L2.300 2.400 L3.500 0.800" fill="none" stroke="#6aa84f" stroke-width="0.600"/></svg>
<div class="abs" style="left:885px;top:241.500px;font-size:9.200px;line-height:12px;color:#7fae62;white-space:nowrap;letter-spacing:0.275px">56.3K%</div>
<div class="abs card" style="left:1043px;top:179px;width:173px;height:90px;background:#fff;border-radius:3px"></div>
<div class="abs" style="left:1049.9px;top:186.700px;width:16px;height:16px;border-radius:50%;background:#fff9e6"></div>
<div class="abs" style="left:1072px;top:188px;font-size:8.700px;line-height:12px;color:#555;white-space:nowrap;letter-spacing:0.060px">Impressions</div>
<svg class="abs" style="left:1125.4px;top:189.2px" width="11" height="11" viewBox="0 0 12 12"><circle cx="6" cy="6" r="5" fill="none" stroke="#666" stroke-width="1.050"/><path d="M6 5.300V8.600" stroke="#666" stroke-width="0.950"/><circle cx="6" cy="3.600" r="0.650" fill="#666"/></svg>
<svg class="abs" style="left:1190.3px;top:189.2px" width="12" height="10" viewBox="0 0 12 10"><path d="M0.800 5H10.600M6.800 1.200L10.600 5L6.800 8.800" fill="none" stroke="#555" stroke-width="1.100" stroke-linecap="round" stroke-linejoin="round"/></svg>
<div class="abs" style="left:1055.8px;top:217.800px;font-size:19px;line-height:24px;color:#333;white-space:nowrap;letter-spacing:-0.881px;-webkit-text-stroke:0.450px #333">7.6M</div>
<div class="abs" style="left:1055.8px;top:243.500px;width:9px;height:9px;border-radius:50%;background:#e2f1dc"></div>
<svg class="abs" style="left:1057.3px;top:245.500px" width="6" height="5" viewBox="0 0 6 5"><path d="M0.500 4 L2.200 2.200 L3.300 3.100 L5.300 0.800" fill="none" stroke="#6aa84f" stroke-width="0.800"/></svg>
<div class="abs" style="left:1068px;top:242px;font-size:9.200px;line-height:12px;color:#7fae62;white-space:nowrap;letter-spacing:-0.345px">90.1K%</div>
<svg class="abs" style="left:693px;top:189.800px" width="10" height="10" viewBox="0 0 10 10"><g fill="none" stroke="#f59331" stroke-width="0.850"><circle cx="5" cy="1.900" r="1.250"/><path d="M2.900 4.600 C3.200 3.700 4 3.400 5 3.400 S6.800 3.700 7.100 4.600"/><circle cx="2.600" cy="5.600" r="1.150"/><circle cx="7.400" cy="5.600" r="1.150"/><path d="M0.700 9.300 C0.700 8 1.500 7.300 2.600 7.300 S4.500 8 4.500 9.300"/><path d="M5.500 9.300 C5.500 8 6.300 7.300 7.400 7.300 S9.300 8 9.300 9.300"/><circle cx="5" cy="5" r="0.700" fill="#f59331" stroke="none"/></g></svg>
<svg class="abs" style="left:872.300px;top:189.200px" width="11" height="11" viewBox="0 0 11 11"><g fill="none" stroke="#8b90d8" stroke-width="0.850" stroke-linecap="round" stroke-linejoin="round"><path d="M5.700 1 A4.300 4.300 0 1 1 2.300 7.900 L0.900 9.900 L1.600 7 A4.300 4.300 0 0 1 5.700 1Z"/><path d="M3.900 7V5.600M5.700 7V3.400M7.500 7V4.600" stroke-width="0.950"/></g></svg>
<svg class="abs" style="left:1052.800px;top:190.700px" width="10.400" height="8.400" viewBox="0 0 10.400 8.400"><path d="M0.200 4.200 C1.600 1.600 3.300 0.300 5.200 0.300 S8.800 1.600 10.200 4.200 C8.800 6.800 7.100 8.100 5.200 8.100 S1.600 6.800 0.200 4.200Z" fill="#fbe07a"/><circle cx="5.200" cy="4.200" r="2.100" fill="none" stroke="#fff6d8" stroke-width="0.900"/></svg>
<svg class="abs" style="left:0;top:0" width="1541" height="867" viewBox="0 0 1541 867">
<path d="M754.40 238.75C754.40 238.75 756.29 240.12 757.02 239.75C758.40 239.04 758.42 232.19 759.63 230.04C760.38 228.72 761.28 227.66 762.25 227.30C763.06 227.00 764.05 227.18 764.87 227.55C765.82 227.98 766.53 229.71 767.48 230.04C768.30 230.32 769.35 229.36 770.10 229.79C771.26 230.46 771.69 234.07 772.72 235.52C773.50 236.61 774.45 237.98 775.33 238.01C776.20 238.03 777.09 236.55 777.95 235.77C778.83 234.97 779.66 233.35 780.57 233.28C781.41 233.20 782.38 234.23 783.18 235.02C784.15 235.97 784.77 238.28 785.80 238.75C786.58 239.12 787.56 238.36 788.42 238.51C789.31 238.66 790.14 239.55 791.03 239.75C791.88 239.94 792.89 240.20 793.65 239.75C794.75 239.10 795.38 235.04 796.27 235.02C797.12 235.00 798.08 239.33 798.88 239.25C799.85 239.16 800.65 232.51 801.50 232.53C802.39 232.54 803.01 239.76 804.12 240.00C804.88 240.16 805.84 237.31 806.73 237.26C807.59 237.22 808.41 239.25 809.35 239.50C810.17 239.72 811.18 239.50 811.97 239.00C812.98 238.37 813.65 235.62 814.58 235.52C815.41 235.43 816.33 237.01 817.20 237.76C818.07 238.51 819.09 240.25 819.82 240.00C821.22 239.52 820.94 228.22 822.43 227.55C823.16 227.22 824.32 228.08 825.05 229.04C826.44 230.89 826.70 239.70 827.67 239.75C828.47 239.79 829.42 232.52 830.28 232.53C831.16 232.53 832.90 240.00 832.90 240.00L832.90 240.00L754.40 240.00Z" fill="#ebe9f8"/>
<path d="M754.40 238.75C754.40 238.75 756.29 240.12 757.02 239.75C758.40 239.04 758.42 232.19 759.63 230.04C760.38 228.72 761.28 227.66 762.25 227.30C763.06 227.00 764.05 227.18 764.87 227.55C765.82 227.98 766.53 229.71 767.48 230.04C768.30 230.32 769.35 229.36 770.10 229.79C771.26 230.46 771.69 234.07 772.72 235.52C773.50 236.61 774.45 237.98 775.33 238.01C776.20 238.03 777.09 236.55 777.95 235.77C778.83 234.97 779.66 233.35 780.57 233.28C781.41 233.20 782.38 234.23 783.18 235.02C784.15 235.97 784.77 238.28 785.80 238.75C786.58 239.12 787.56 238.36 788.42 238.51C789.31 238.66 790.14 239.55 791.03 239.75C791.88 239.94 792.89 240.20 793.65 239.75C794.75 239.10 795.38 235.04 796.27 235.02C797.12 235.00 798.08 239.33 798.88 239.25C799.85 239.16 800.65 232.51 801.50 232.53C802.39 232.54 803.01 239.76 804.12 240.00C804.88 240.16 805.84 237.31 806.73 237.26C807.59 237.22 808.41 239.25 809.35 239.50C810.17 239.72 811.18 239.50 811.97 239.00C812.98 238.37 813.65 235.62 814.58 235.52C815.41 235.43 816.33 237.01 817.20 237.76C818.07 238.51 819.09 240.25 819.82 240.00C821.22 239.52 820.94 228.22 822.43 227.55C823.16 227.22 824.32 228.08 825.05 229.04C826.44 230.89 826.70 239.70 827.67 239.75C828.47 239.79 829.42 232.52 830.28 232.53C831.16 232.53 832.90 240.00 832.90 240.00" fill="none" stroke="#4f5fc0" stroke-width="1.900" stroke-linecap="round"/>
<path d="M938.10 236.80 V218.50 Q938.10 216.50 940.05 216.00 Q942.00 216.50 942.00 218.50 V236.80 Z" fill="#a9a9e0"/>
<path d="M938.45 236.80 V222.00 Q938.45 220.00 940.05 219.60 Q941.65 220.00 941.65 222.00 V236.80 Z" fill="#dbdaf1"/>
<rect x="938.10" y="233.80" width="3.90" height="3.00" fill="#7f83d0"/>
<path d="M943.67 236.80 V217.60 Q943.67 215.60 945.62 215.10 Q947.57 215.60 947.57 217.60 V236.80 Z" fill="#a9a9e0"/>
<path d="M944.02 236.80 V221.10 Q944.02 219.10 945.62 218.70 Q947.22 219.10 947.22 221.10 V236.80 Z" fill="#dbdaf1"/>
<rect x="943.67" y="233.80" width="3.90" height="3.00" fill="#7f83d0"/>
<path d="M949.25 236.80 V218.50 Q949.25 216.50 951.20 216.00 Q953.15 216.50 953.15 218.50 V236.80 Z" fill="#a9a9e0"/>
<path d="M949.60 236.80 V222.00 Q949.60 220.00 951.20 219.60 Q952.80 220.00 952.80 222.00 V236.80 Z" fill="#dbdaf1"/>
<rect x="949.25" y="233.80" width="3.90" height="3.00" fill="#7f83d0"/>
<path d="M954.82 236.80 V219.10 Q954.82 217.10 956.77 216.60 Q958.72 217.10 958.72 219.10 V236.80 Z" fill="#a9a9e0"/>
<path d="M955.17 236.80 V222.60 Q955.17 220.60 956.77 220.20 Q958.37 220.60 958.37 222.60 V236.80 Z" fill="#dbdaf1"/>
<rect x="954.82" y="233.30" width="3.90" height="3.50" fill="#7f83d0"/>
<path d="M960.40 236.80 V222.60 Q960.40 220.60 962.35 220.10 Q964.30 220.60 964.30 222.60 V236.80 Z" fill="#a9a9e0"/>
<path d="M960.75 236.80 V226.10 Q960.75 224.10 962.35 223.70 Q963.95 224.10 963.95 226.10 V236.80 Z" fill="#dbdaf1"/>
<rect x="960.40" y="233.80" width="3.90" height="3.00" fill="#7f83d0"/>
<path d="M965.97 236.80 V226.00 Q965.97 224.00 967.92 223.50 Q969.87 224.00 969.87 226.00 V236.80 Z" fill="#a9a9e0"/>
<path d="M966.32 236.80 V229.50 Q966.32 227.50 967.92 227.10 Q969.52 227.50 969.52 229.50 V236.80 Z" fill="#dbdaf1"/>
<rect x="965.97" y="234.80" width="3.90" height="2.00" fill="#7f83d0"/>
<path d="M971.55 236.80 V228.60 Q971.55 226.60 973.50 226.10 Q975.45 226.60 975.45 228.60 V236.80 Z" fill="#a9a9e0"/>
<path d="M971.90 236.80 V232.10 Q971.90 230.10 973.50 229.70 Q975.10 230.10 975.10 232.10 V236.80 Z" fill="#dbdaf1"/>
<rect x="971.55" y="235.80" width="3.90" height="1.00" fill="#7f83d0"/>
<path d="M977.12 236.80 V219.50 Q977.12 217.50 979.07 217.00 Q981.02 217.50 981.02 219.50 V236.80 Z" fill="#a9a9e0"/>
<path d="M977.47 236.80 V223.00 Q977.47 221.00 979.07 220.60 Q980.67 221.00 980.67 223.00 V236.80 Z" fill="#dbdaf1"/>
<rect x="977.12" y="232.80" width="3.90" height="4.00" fill="#7f83d0"/>
<path d="M982.70 236.80 V220.90 Q982.70 218.90 984.65 218.40 Q986.60 218.90 986.60 220.90 V236.80 Z" fill="#a9a9e0"/>
<path d="M983.05 236.80 V224.40 Q983.05 222.40 984.65 222.00 Q986.25 222.40 986.25 224.40 V236.80 Z" fill="#dbdaf1"/>
<rect x="982.70" y="233.30" width="3.90" height="3.50" fill="#7f83d0"/>
<path d="M988.27 236.80 V217.60 Q988.27 215.60 990.22 215.10 Q992.17 215.60 992.17 217.60 V236.80 Z" fill="#a9a9e0"/>
<path d="M988.62 236.80 V221.10 Q988.62 219.10 990.22 218.70 Q991.82 219.10 991.82 221.10 V236.80 Z" fill="#dbdaf1"/>
<rect x="988.27" y="233.80" width="3.90" height="3.00" fill="#7f83d0"/>
<path d="M993.85 236.80 V227.90 Q993.85 225.90 995.80 225.40 Q997.75 225.90 997.75 227.90 V236.80 Z" fill="#a9a9e0"/>
<path d="M994.20 236.80 V231.40 Q994.20 229.40 995.80 229.00 Q997.40 229.40 997.40 231.40 V236.80 Z" fill="#dbdaf1"/>
<rect x="993.85" y="235.80" width="3.90" height="1.00" fill="#7f83d0"/>
<path d="M999.42 236.80 V228.60 Q999.42 226.60 1001.38 226.10 Q1003.32 226.60 1003.32 228.60 V236.80 Z" fill="#a9a9e0"/>
<path d="M999.77 236.80 V232.10 Q999.77 230.10 1001.38 229.70 Q1002.97 230.10 1002.97 232.10 V236.80 Z" fill="#dbdaf1"/>
<rect x="999.42" y="235.80" width="3.90" height="1.00" fill="#7f83d0"/>
<path d="M1005.00 236.80 V222.60 Q1005.00 220.60 1006.95 220.10 Q1008.90 220.60 1008.90 222.60 V236.80 Z" fill="#a9a9e0"/>
<path d="M1005.35 236.80 V226.10 Q1005.35 224.10 1006.95 223.70 Q1008.55 224.10 1008.55 226.10 V236.80 Z" fill="#dbdaf1"/>
<rect x="1005.00" y="233.30" width="3.90" height="3.50" fill="#7f83d0"/>
<path d="M1010.57 236.80 V218.90 Q1010.57 216.90 1012.52 216.40 Q1014.47 216.90 1014.47 218.90 V236.80 Z" fill="#a9a9e0"/>
<path d="M1010.92 236.80 V222.40 Q1010.92 220.40 1012.52 220.00 Q1014.12 220.40 1014.12 222.40 V236.80 Z" fill="#dbdaf1"/>
<rect x="1010.57" y="234.30" width="3.90" height="2.50" fill="#7f83d0"/>
<path d="M1114.41 233.49C1114.41 233.49 1116.03 231.87 1117.01 231.55C1117.98 231.22 1119.38 232.07 1120.25 231.55C1121.31 230.91 1121.47 227.55 1122.52 227.33C1123.68 227.09 1125.74 229.97 1127.06 230.90C1128.03 231.58 1128.74 232.51 1129.66 232.52C1130.68 232.53 1131.84 230.80 1132.90 230.57C1133.78 230.39 1134.66 230.91 1135.50 230.90C1136.28 230.89 1136.98 230.35 1137.77 230.57C1138.89 230.89 1140.30 233.38 1141.34 233.49C1142.06 233.57 1142.67 233.08 1143.29 232.52C1144.18 231.71 1144.91 228.63 1145.75 228.63C1146.64 228.62 1147.23 232.45 1148.48 232.85C1149.75 233.25 1151.88 230.76 1153.35 230.90C1154.66 231.02 1155.88 233.04 1156.91 233.17C1157.64 233.26 1158.22 232.94 1158.86 232.52C1159.74 231.94 1160.59 229.66 1161.46 229.60C1162.21 229.55 1162.93 231.52 1163.73 231.55C1164.55 231.57 1165.42 229.63 1166.32 229.60C1167.26 229.57 1168.29 231.53 1169.24 231.55C1170.13 231.56 1171.01 229.83 1171.84 229.93C1172.75 230.03 1173.33 232.28 1174.44 232.52C1175.80 232.82 1178.12 230.76 1179.63 230.57C1180.72 230.44 1181.68 230.52 1182.55 230.90C1183.42 231.28 1184.03 232.82 1184.82 232.85C1185.64 232.87 1186.53 230.95 1187.41 230.90C1188.26 230.85 1189.18 231.89 1190.01 232.39C1190.80 232.86 1192.28 233.82 1192.28 233.82L1192.28 234.12C1192.28 234.12 1190.80 233.43 1190.01 233.19C1189.19 232.95 1188.27 232.63 1187.41 232.70C1186.54 232.77 1185.67 233.56 1184.82 233.65C1184.05 233.72 1183.35 233.40 1182.55 233.30C1181.64 233.18 1180.74 232.98 1179.63 232.97C1178.14 232.97 1175.86 233.66 1174.44 233.52C1173.41 233.42 1172.70 232.72 1171.84 232.73C1170.97 232.73 1170.12 233.60 1169.24 233.55C1168.29 233.49 1167.28 232.27 1166.32 232.20C1165.45 232.13 1164.57 232.93 1163.73 232.95C1162.95 232.96 1162.23 232.36 1161.46 232.40C1160.61 232.44 1159.67 233.09 1158.86 233.32C1158.17 233.52 1157.66 233.77 1156.91 233.77C1155.90 233.76 1154.63 232.95 1153.35 232.90C1151.85 232.83 1149.84 233.87 1148.48 233.65C1147.41 233.47 1146.65 232.26 1145.75 232.23C1144.92 232.20 1144.07 233.03 1143.29 233.32C1142.61 233.57 1142.09 233.90 1141.34 233.89C1140.33 233.89 1138.84 232.91 1137.77 232.77C1136.94 232.67 1136.28 232.93 1135.50 232.90C1134.66 232.87 1133.81 232.50 1132.90 232.57C1131.87 232.66 1130.67 233.57 1129.66 233.52C1128.74 233.48 1128.06 232.84 1127.06 232.50C1125.77 232.05 1123.69 230.77 1122.52 231.13C1121.50 231.45 1121.20 233.45 1120.25 233.95C1119.35 234.42 1118.03 234.07 1117.01 234.15C1116.09 234.22 1114.41 234.40 1114.41 234.40 Z" fill="#5b6ac1"/>
<path d="M1114.41 234.40C1114.41 234.40 1116.09 234.22 1117.01 234.15C1118.03 234.07 1119.35 234.42 1120.25 233.95C1121.20 233.45 1121.50 231.45 1122.52 231.13C1123.69 230.77 1125.77 232.05 1127.06 232.50C1128.06 232.84 1128.74 233.48 1129.66 233.52C1130.67 233.57 1131.87 232.66 1132.90 232.57C1133.81 232.50 1134.66 232.87 1135.50 232.90C1136.28 232.93 1136.94 232.67 1137.77 232.77C1138.84 232.91 1140.33 233.89 1141.34 233.89C1142.09 233.90 1142.61 233.57 1143.29 233.32C1144.07 233.03 1144.92 232.20 1145.75 232.23C1146.65 232.26 1147.41 233.47 1148.48 233.65C1149.84 233.87 1151.85 232.83 1153.35 232.90C1154.63 232.95 1155.90 233.76 1156.91 233.77C1157.66 233.77 1158.17 233.52 1158.86 233.32C1159.67 233.09 1160.61 232.44 1161.46 232.40C1162.23 232.36 1162.95 232.96 1163.73 232.95C1164.57 232.93 1165.45 232.13 1166.32 232.20C1167.28 232.27 1168.29 233.49 1169.24 233.55C1170.12 233.60 1170.97 232.73 1171.84 232.73C1172.70 232.72 1173.41 233.42 1174.44 233.52C1175.86 233.66 1178.14 232.97 1179.63 232.97C1180.74 232.98 1181.64 233.18 1182.55 233.30C1183.35 233.40 1184.05 233.72 1184.82 233.65C1185.67 233.56 1186.54 232.77 1187.41 232.70C1188.27 232.63 1189.19 232.95 1190.01 233.19C1190.80 233.43 1192.28 234.12 1192.28 234.12" fill="none" stroke="#f7941d" stroke-width="1.500" stroke-linejoin="round" stroke-linecap="round"/>
<path d="M1114.41 233.49C1114.41 233.49 1116.03 231.87 1117.01 231.55C1117.98 231.22 1119.38 232.07 1120.25 231.55C1121.31 230.91 1121.47 227.55 1122.52 227.33C1123.68 227.09 1125.74 229.97 1127.06 230.90C1128.03 231.58 1128.74 232.51 1129.66 232.52C1130.68 232.53 1131.84 230.80 1132.90 230.57C1133.78 230.39 1134.66 230.91 1135.50 230.90C1136.28 230.89 1136.98 230.35 1137.77 230.57C1138.89 230.89 1140.30 233.38 1141.34 233.49C1142.06 233.57 1142.67 233.08 1143.29 232.52C1144.18 231.71 1144.91 228.63 1145.75 228.63C1146.64 228.62 1147.23 232.45 1148.48 232.85C1149.75 233.25 1151.88 230.76 1153.35 230.90C1154.66 231.02 1155.88 233.04 1156.91 233.17C1157.64 233.26 1158.22 232.94 1158.86 232.52C1159.74 231.94 1160.59 229.66 1161.46 229.60C1162.21 229.55 1162.93 231.52 1163.73 231.55C1164.55 231.57 1165.42 229.63 1166.32 229.60C1167.26 229.57 1168.29 231.53 1169.24 231.55C1170.13 231.56 1171.01 229.83 1171.84 229.93C1172.75 230.03 1173.33 232.28 1174.44 232.52C1175.80 232.82 1178.12 230.76 1179.63 230.57C1180.72 230.44 1181.68 230.52 1182.55 230.90C1183.42 231.28 1184.03 232.82 1184.82 232.85C1185.64 232.87 1186.53 230.95 1187.41 230.90C1188.26 230.85 1189.18 231.89 1190.01 232.39C1190.80 232.86 1192.28 233.82 1192.28 233.82" fill="none" stroke="#26326a" stroke-width="1.700" stroke-linejoin="round" stroke-linecap="round"/>
</svg>
</body>
</html>
